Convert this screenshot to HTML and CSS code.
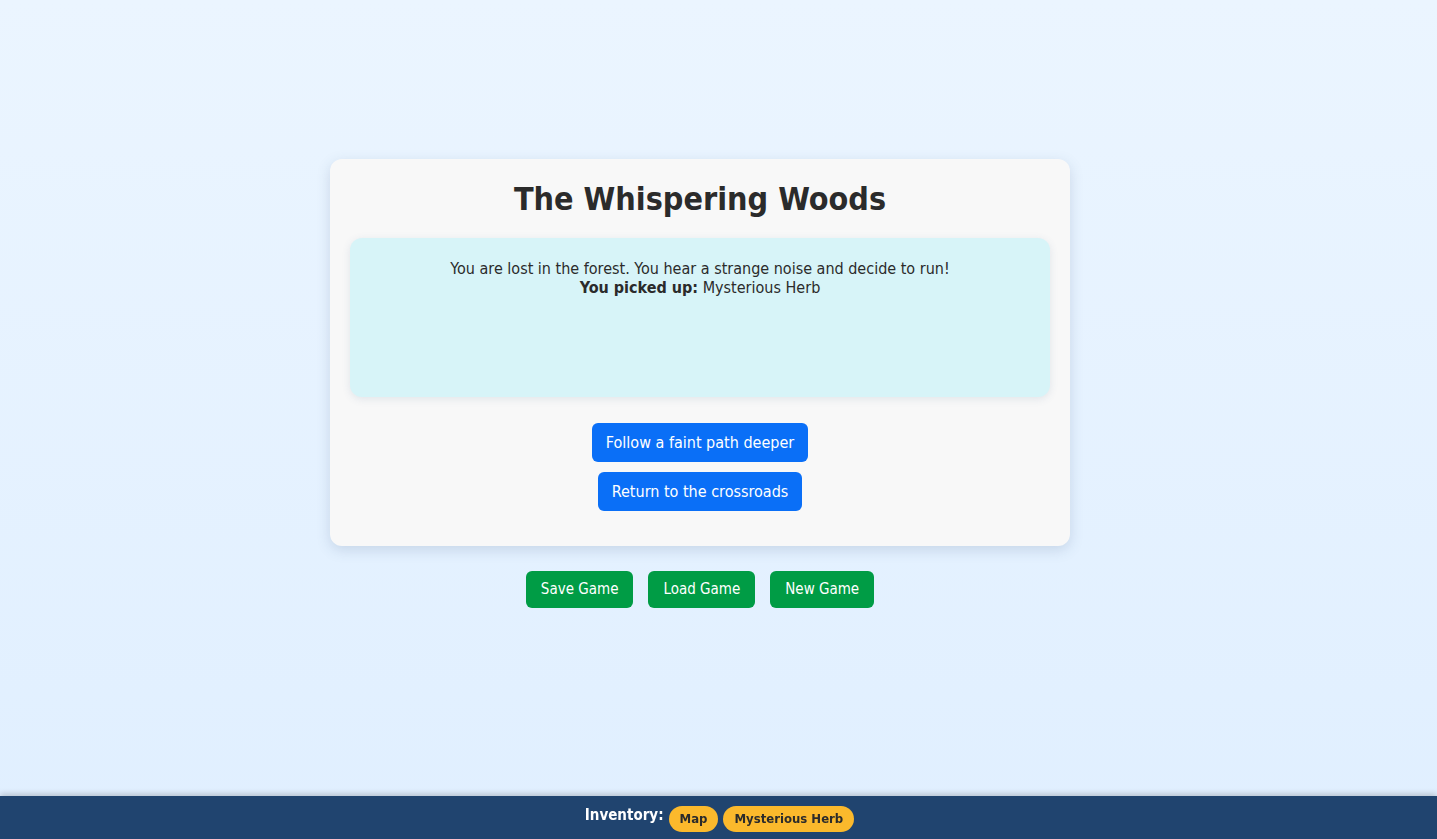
FILE: index.html
```html
<!DOCTYPE html>
<html lang="en">
<head>
<meta charset="utf-8">
<title>The Whispering Woods</title>
<link rel="stylesheet" href="styles.css">
</head>
<body>
<main class="page">
  <section class="card">
    <h1 class="title">The Whispering Woods</h1>
    <div class="story">
      <p class="story-text">You are lost in the forest. You hear a strange noise and decide to run!<br><strong>You picked up:</strong> Mysterious Herb</p>
    </div>
    <div class="choices">
      <button class="choice">Follow a faint path deeper</button>
      <button class="choice">Return to the crossroads</button>
    </div>
  </section>
  <div class="controls">
    <button class="control">Save Game</button>
    <button class="control">Load Game</button>
    <button class="control">New Game</button>
  </div>
</main>
<footer class="inventory">
  <span class="inv-label">Inventory:</span>
  <span class="badge">Map</span>
  <span class="badge">Mysterious Herb</span>
</footer>
</body>
</html>
```
FILE: styles.css
```css
* { box-sizing: border-box; }
html, body { margin: 0; padding: 0; height: 100%; }
body {
  font-family: Tahoma, "DejaVu Sans Condensed", "DejaVu Sans", sans-serif;
  color: #2b2b2b;
  background: linear-gradient(180deg, #ebf5ff 0%, #e0efff 100%);
  min-height: 100vh;
}
.page {
  display: flex;
  flex-direction: column;
  align-items: center;
  padding-top: 159px;
  padding-right: 37px;
}
.card {
  width: 740px;
  background: #f8f8f8;
  border-radius: 12px;
  box-shadow: 0 4px 14px rgba(60, 90, 130, 0.18);
  padding: 20px 20px 35px;
}
.title {
  margin: 0 0 19px;
  font-size: 32px;
  line-height: 40px;
  font-weight: bold;
  text-align: center;
  color: #2b2b2b;
}
.story {
  background: #d7f4f8;
  border-radius: 12px;
  box-shadow: 0 2px 8px rgba(60, 90, 130, 0.12);
  min-height: 159px;
  padding: 21px 20px 20px;
  text-align: center;
}
.story-text {
  margin: 0;
  font-size: 16px;
  line-height: 19px;
}
.choices {
  display: flex;
  flex-direction: column;
  align-items: center;
  gap: 10px;
  margin-top: 26px;
}
.choice {
  font-family: inherit;
  font-size: 16px;
  line-height: 19px;
  padding: 10px 14px;
  border: none;
  border-radius: 6px;
  background: #0a6ff7;
  color: #fff;
  cursor: pointer;
}
.controls {
  display: flex;
  gap: 15px;
  margin-top: 25px;
}
.control {
  font-family: inherit;
  font-size: 15px;
  line-height: 17px;
  padding: 10px 15px;
  border: none;
  border-radius: 6px;
  background: #009c45;
  color: #fff;
  cursor: pointer;
}
.inventory {
  position: fixed;
  left: 0;
  right: 0;
  bottom: 0;
  height: 43px;
  background: #20446f;
  box-shadow: 0 -2px 6px rgba(0, 0, 0, 0.2);
  display: flex;
  align-items: center;
  justify-content: center;
  gap: 5px;
  padding-top: 3px;
  padding-left: 2px;
}
.inv-label {
  color: #fff;
  font-weight: bold;
  font-size: 15px;
  margin-top: -8px;
}
.badge {
  background: #fbb92c;
  color: #2b2b2b;
  font-weight: bold;
  font-size: 13px;
  line-height: 16px;
  padding: 5px 11px 5px 11px;
  border-radius: 13px;
}
```
